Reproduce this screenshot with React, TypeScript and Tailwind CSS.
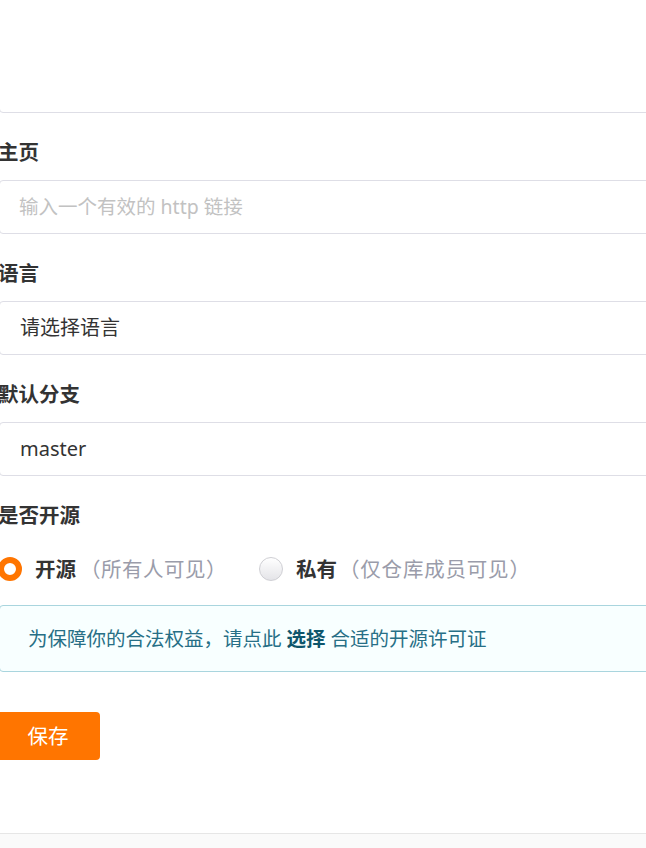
import React from "react";

const fieldBox =
  "h-[54px] border border-[#dedee6] rounded-[4px] px-[20px] flex items-center text-[20px] text-[#333]";

function Label({ children }: { children: React.ReactNode }) {
  return (
    <div className="pt-[25px] pb-[14px] leading-[28px] text-[20.5px] font-bold text-[#333] -ml-[1px]">
      {children}
    </div>
  );
}

export default function App() {
  return (
    <div className="w-[646px] h-[848px] overflow-hidden bg-white flex flex-col font-['Noto_Sans','Noto_Sans_CJK_SC',sans-serif]">
      <div className="flex-1 w-[680px] -ml-[1px]">
        {/* description box, top is scrolled off */}
        <div className="mt-[-20px] h-[133px] border border-[#dedee6] rounded-[4px]" />

        <Label>主页</Label>
        <div className={fieldBox}>
          <span className="text-[19.5px] text-[#c2c2c2] -ml-[1px]">输入一个有效的 http 链接</span>
        </div>

        <Label>语言</Label>
        <div className={fieldBox}>请选择语言</div>

        <Label>默认分支</Label>
        <div className={fieldBox}>master</div>

        <Label>是否开源</Label>

        {/* visibility radios */}
        <div className="mt-[12px] h-[28px] flex items-center text-[20.5px] -ml-[1px]">
          <span className="w-[24px] h-[24px] rounded-full border-[6px] border-[#ff7500] bg-white" />
          <span className="ml-[13px] font-bold text-[#333]">开源</span>
          <span className="ml-[4px] text-[#9a9caa] tracking-[0.5px]">（所有人可见）</span>
          <span className="ml-[32px] w-[24px] h-[24px] rounded-full border border-[#cfcfd4] bg-gradient-to-b from-white to-[#e4e4e8]" />
          <span className="ml-[13px] font-bold text-[#333]">私有</span>
          <span className="ml-[2px] text-[#9a9caa] tracking-[0.8px]">（仅仓库成员可见）</span>
        </div>

        <div className="mt-[22px] h-[67px] border border-[#a9d5de] rounded-[4px] bg-[#f8ffff] flex items-center pl-[28px] text-[19.5px] text-[#276f86]">
          为保障你的合法权益，请点此<span className="mx-[5px] font-bold text-[#0e566c]">选择</span>合适的开源许可证
        </div>

        <button className="mt-[40px] -ml-[3px] w-[104px] h-[48px] rounded-[4px] bg-[#ff7500] text-white text-[20.5px]">
          保存
        </button>
      </div>

      <div className="h-[15px] border-t border-[#e6e6e6] bg-[#fafafa]" />
    </div>
  );
}
